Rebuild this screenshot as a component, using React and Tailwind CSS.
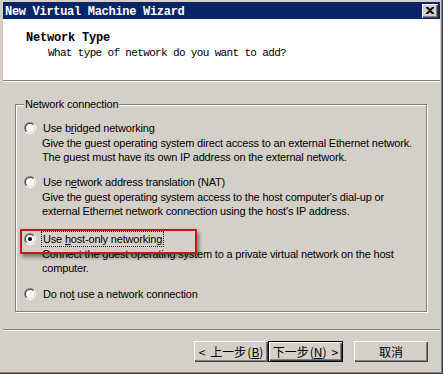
import React from "react";

function Radio({ checked }) {
  return (
    <div className="w-[12px] h-[12px] shrink-0 rounded-full border border-t-[#808080] border-l-[#808080] border-b-white border-r-white">
      <div className="w-full h-full rounded-full border border-t-[#404040] border-l-[#404040] border-b-[#d4d0c8] border-r-[#d4d0c8] bg-white flex items-center justify-center">
        {checked && <div className="w-[4px] h-[4px] rounded-full bg-black" />}
      </div>
    </div>
  );
}

function Option({ label, desc, checked, focus, className = "" }) {
  return (
    <div className={className}>
      <div className="flex items-center h-[16px]">
        <Radio checked={checked} />
        <span
          className={
            "ml-[5px] leading-[14px] px-[1px] " +
            (focus ? "border border-dotted border-black" : "border border-transparent")
          }
        >
          {label}
        </span>
      </div>
      {desc && (
        <div className="ml-[18px] leading-[14px]">
          {desc.map((d, i) => (
            <div key={i}>{d}</div>
          ))}
        </div>
      )}
    </div>
  );
}

function Btn({ children, def = false, w }) {
  const inner =
    "h-full w-full flex items-center justify-center bg-[#d4d0c8] shadow-[inset_1px_1px_0_#fff,inset_-1px_-1px_0_#404040,inset_-2px_-2px_0_#808080]";
  return (
    <div className={"h-[21px] " + w + (def ? " border border-black" : "")}>
      <div className={inner}>{children}</div>
    </div>
  );
}

export default function App() {
  return (
    <div className="w-[444px] h-[376px] bg-white overflow-hidden">
      <div className="w-[443px] h-[374px] bg-[#d4d0c8] pt-[2px] pl-[3px] pr-[3px] shadow-[inset_-1px_-1px_0_#404040,inset_-2px_-2px_0_#808080] flex flex-col font-['Liberation_Sans',Arial,sans-serif] text-[11px] tracking-[-0.18px] text-black">
        {/* Title bar */}
        <div className="h-[17px] bg-[#0a246a] flex items-center justify-between">
          <span className="pl-[2px] pt-[2px] text-white font-bold font-['Liberation_Mono',monospace] text-[12px] tracking-[-0.3px] leading-[14px]">
            New Virtual Machine Wizard
          </span>
          <div className="mr-[2px] w-[16px] h-[14px] bg-[#d4d0c8] shadow-[inset_1px_1px_0_#fff,inset_-1px_-1px_0_#404040,inset_-2px_-2px_0_#808080] flex items-center justify-center">
            <svg width="8" height="7" viewBox="0 0 8 7" className="-mt-[1px]">
              <path d="M0 0h2l2 2 2-2h2v1L5 3.5 8 6v1H6L4 5 2 7H0V6l3-2.5L0 1z" fill="#000" />
            </svg>
          </div>
        </div>

        {/* Header */}
        <div className="h-[61px] bg-white pt-[12px] font-['Liberation_Mono',monospace] text-[11px] leading-[14px]">
          <div className="pl-[23px] font-bold text-[12px] tracking-[-0.2px]">Network Type</div>
          <div className="pl-[45px] mt-[1px] tracking-[-0.65px]">What type of network do you want to add?</div>
        </div>
        <div className="h-[1px] bg-[#808080]" />
        <div className="h-[1px] bg-white" />

        {/* Group box */}
        <div className="relative mt-[22px] ml-[12px] w-[412px] h-[208px] border border-[#808080] shadow-[inset_1px_1px_0_#fff,1px_1px_0_#fff] pt-[15px] pl-[8px]">
          <div className="absolute left-[8px] -top-[8px] px-[1px] bg-[#d4d0c8] leading-[14px]">
            Network connection
          </div>

          <Option
            label={<>Use b<u>r</u>idged networking</>}
            desc={[
              "Give the guest operating system direct access to an external Ethernet network.",
              "The guest must have its own IP address on the external network.",
            ]}
          />
          <Option
            className="mt-[10px]"
            label={<>Use n<u>e</u>twork address translation (NAT)</>}
            desc={[
              "Give the guest operating system access to the host computer's dial-up or",
              "external Ethernet network connection using the host's IP address.",
            ]}
          />
          <Option
            className="mt-[13px]"
            checked
            focus
            label={<>Use <u>h</u>ost-only networking</>}
            desc={[
              "Connect the guest operating system to a private virtual network on the host",
              "computer.",
            ]}
          />
          <Option
            className="mt-[11px]"
            label={<>Do no<u>t</u> use a network connection</>}
          />

          {/* Red highlight annotation */}
          <div className="absolute left-[4px] top-[124px] w-[177px] h-[25px] border-2 border-[#c8141c] shadow-[2px_3px_4px_rgba(0,0,0,0.45)]" />
        </div>

        {/* Separator */}
        <div className="mt-[17px] h-[1px] bg-[#808080]" />
        <div className="h-[1px] bg-white" />

        {/* Buttons */}
        <div className="mt-[10px] ml-[191px] flex font-['Noto_Sans_CJK_SC',sans-serif] text-[12px] leading-[14px] tracking-normal">
          <Btn w="w-[74px]">
            <span className="flex items-center">
              <span>&lt;</span>
              <span className="ml-[5px]">上一步</span>
              <span className="ml-[1px]">(<u>B</u>)</span>
            </span>
          </Btn>
          <Btn w="w-[75px]" def>
            <span className="flex items-center">
              <span>下一步</span>
              <span className="ml-[1px]">(<u>N</u>)</span>
              <span className="ml-[5px]">&gt;</span>
            </span>
          </Btn>
          <div className="w-[11px]" />
          <Btn w="w-[74px]">
            <span>取消</span>
          </Btn>
        </div>
      </div>
    </div>
  );
}
